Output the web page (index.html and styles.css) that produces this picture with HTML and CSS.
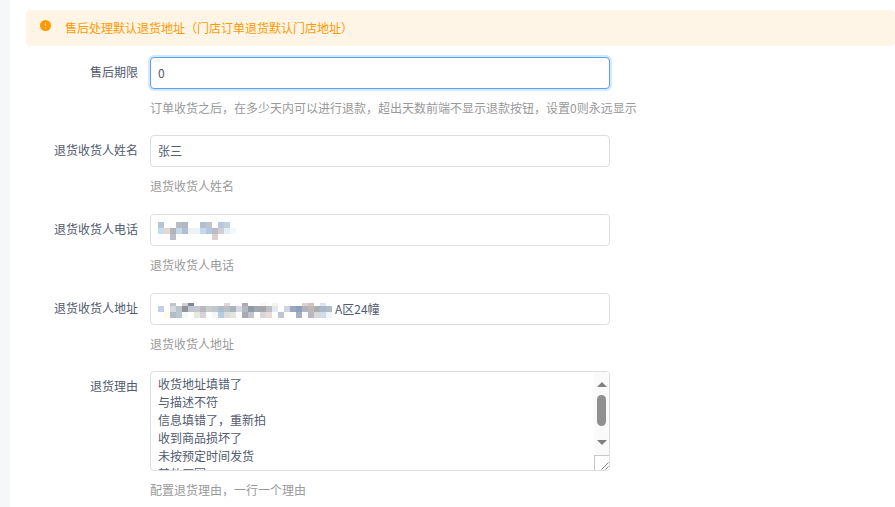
FILE: index.html
```html
<!DOCTYPE html>
<html lang="zh-CN">

<head>
  <meta charset="UTF-8">
  <title>售后设置</title>
  <link rel="stylesheet" href="styles.css">
</head>

<body>
  <div class="content">
    <div class="alert">
      <span class="alert-icon">
        <svg width="11" height="11" viewBox="0 0 11 11">
          <circle cx="5.5" cy="5.5" r="5.5" fill="#ff9900" />
          <rect x="5" y="2.5" width="1" height="3.5" fill="#ffd9a0" />
          <rect x="5" y="7" width="1" height="1.2" fill="#ffd9a0" />
        </svg>
      </span>
      <span>售后处理默认退货地址（门店订单退货默认门店地址）</span>
    </div>

    <form class="form">
      <div class="form-item">
        <label>售后期限</label>
        <div class="field">
          <input class="input input-focus" type="text" value="0">
          <div class="help">订单收货之后，在多少天内可以进行退款，超出天数前端不显示退款按钮，设置0则永远显示</div>
        </div>
      </div>

      <div class="form-item">
        <label>退货收货人姓名</label>
        <div class="field">
          <input class="input" type="text" value="张三">
          <div class="help">退货收货人姓名</div>
        </div>
      </div>

      <div class="form-item">
        <label>退货收货人电话</label>
        <div class="field">
          <div class="input-wrap">
            <input class="input" type="text" value="">
            <!-- blurred phone number -->
            <svg class="mosaic" width="80" height="18" viewBox="158 222 80 18">
              <rect x="158" y="222" width="6" height="6" fill="#b8c4d0" />
              <rect x="176" y="222" width="6" height="6" fill="#b8bcc4" />
              <rect x="182" y="222" width="6" height="6" fill="#b0b8c4" />
              <rect x="200" y="222" width="6" height="6" fill="#b4c0cc" />
              <rect x="206" y="222" width="6" height="6" fill="#c0c4d0" />
              <rect x="218" y="222" width="6" height="6" fill="#b8c8dc" />
              <rect x="224" y="222" width="6" height="6" fill="#c4d0e0" />
              <rect x="158" y="228" width="6" height="6" fill="#c4dcf0" />
              <rect x="164" y="228" width="6" height="6" fill="#e4d8d0" />
              <rect x="170" y="228" width="6" height="6" fill="#b0b4bc" />
              <rect x="176" y="228" width="6" height="6" fill="#c4d8ec" />
              <rect x="182" y="228" width="6" height="6" fill="#b0c0d4" />
              <rect x="188" y="228" width="6" height="6" fill="#f0f0f0" />
              <rect x="194" y="228" width="6" height="6" fill="#e8f4fa" />
              <rect x="200" y="228" width="6" height="6" fill="#c8d8ec" />
              <rect x="206" y="228" width="6" height="6" fill="#b4c8e0" />
              <rect x="212" y="228" width="6" height="6" fill="#b8bcc8" />
              <rect x="218" y="228" width="6" height="6" fill="#d0d0d4" />
              <rect x="224" y="228" width="6" height="6" fill="#e4eef4" />
              <rect x="230" y="228" width="6" height="6" fill="#f0fafe" />
              <rect x="170" y="234" width="6" height="6" fill="#bcbccc" />
              <rect x="212" y="234" width="6" height="6" fill="#dcd0cc" />
            </svg>
          </div>
          <div class="help">退货收货人电话</div>
        </div>
      </div>

      <div class="form-item">
        <label>退货收货人地址</label>
        <div class="field">
          <div class="input-wrap">
            <input class="input input-address" type="text" value="A区24幢">
            <!-- blurred street address -->
            <svg class="mosaic mosaic-address" width="176" height="15" viewBox="158 303 176 15">
              <rect x="170" y="303" width="6" height="3" fill="#c0c4cc" />
              <rect x="182" y="303" width="6" height="3" fill="#d0d0d8" />
              <rect x="188" y="303" width="6" height="3" fill="#7c8898" />
              <rect x="224" y="303" width="6" height="3" fill="#e0d4d4" />
              <rect x="242" y="303" width="6" height="3" fill="#b0a8b8" />
              <rect x="260" y="303" width="6" height="3" fill="#fdf4ea" />
              <rect x="272" y="303" width="6" height="3" fill="#f4f4ee" />
              <rect x="302" y="303" width="6" height="3" fill="#e0d0cc" />
              <rect x="308" y="303" width="6" height="3" fill="#d0c4c0" />
              <rect x="320" y="303" width="6" height="3" fill="#dde4f0" />

              <rect x="158" y="306" width="6" height="6" fill="#c4d0e8" />
              <rect x="170" y="306" width="6" height="6" fill="#d8d8e0" />
              <rect x="176" y="306" width="6" height="6" fill="#bcc4cc" />
              <rect x="182" y="306" width="6" height="6" fill="#909498" />
              <rect x="188" y="306" width="6" height="6" fill="#c0c4cc" />
              <rect x="194" y="306" width="6" height="6" fill="#c8c4d4" />
              <rect x="200" y="306" width="6" height="6" fill="#b8b8c0" />
              <rect x="206" y="306" width="6" height="6" fill="#c8ccd0" />
              <rect x="212" y="306" width="6" height="6" fill="#c0c8cc" />
              <rect x="218" y="306" width="6" height="6" fill="#b0bcc8" />
              <rect x="224" y="306" width="6" height="6" fill="#b8c0c8" />
              <rect x="230" y="306" width="6" height="6" fill="#a8b4bc" />
              <rect x="236" y="306" width="6" height="6" fill="#d8d8e4" />
              <rect x="242" y="306" width="6" height="6" fill="#b8b8c4" />
              <rect x="248" y="306" width="6" height="6" fill="#909aa4" />
              <rect x="254" y="306" width="6" height="6" fill="#a0a8b0" />
              <rect x="260" y="306" width="6" height="6" fill="#a8a8ac" />
              <rect x="266" y="306" width="6" height="6" fill="#bbbec2" />
              <rect x="272" y="306" width="6" height="6" fill="#e4e8f0" />
              <rect x="284" y="306" width="6" height="6" fill="#d0d4dc" />
              <rect x="290" y="306" width="6" height="6" fill="#98a8c0" />
              <rect x="296" y="306" width="6" height="6" fill="#90a0b8" />
              <rect x="302" y="306" width="6" height="6" fill="#b0b4bc" />
              <rect x="308" y="306" width="6" height="6" fill="#c0b8b4" />
              <rect x="314" y="306" width="6" height="6" fill="#a8b0b4" />
              <rect x="320" y="306" width="6" height="6" fill="#a8b8c8" />
              <rect x="326" y="306" width="6" height="6" fill="#b0bcc8" />

              <rect x="164" y="312" width="6" height="6" fill="#fdfce8" />
              <rect x="170" y="312" width="6" height="6" fill="#b0bcc8" />
              <rect x="176" y="312" width="6" height="6" fill="#bcc8d0" />
              <rect x="182" y="312" width="6" height="6" fill="#f4fafa" />
              <rect x="194" y="312" width="6" height="6" fill="#e4ecdc" />
              <rect x="200" y="312" width="6" height="6" fill="#d8d0d8" />
              <rect x="212" y="312" width="6" height="6" fill="#f4f8fc" />
              <rect x="218" y="312" width="6" height="6" fill="#b4cce4" />
              <rect x="224" y="312" width="6" height="6" fill="#dcdcdc" />
              <rect x="230" y="312" width="6" height="6" fill="#e8e4e0" />
              <rect x="242" y="312" width="6" height="6" fill="#a8a8b8" />
              <rect x="248" y="312" width="6" height="6" fill="#c0c4cc" />
              <rect x="260" y="312" width="6" height="6" fill="#d8d8dc" />
              <rect x="266" y="312" width="6" height="6" fill="#e8dcd4" />
              <rect x="278" y="312" width="6" height="6" fill="#c0c4d0" />
              <rect x="296" y="312" width="6" height="6" fill="#a8b0c4" />
              <rect x="308" y="312" width="6" height="6" fill="#b8b8c0" />
              <rect x="314" y="312" width="6" height="6" fill="#d8d8dc" />
              <rect x="320" y="312" width="6" height="6" fill="#d0dce8" />
              <rect x="326" y="312" width="6" height="6" fill="#f0f4f8" />
            </svg>
          </div>
          <div class="help">退货收货人地址</div>
        </div>
      </div>

      <div class="form-item">
        <label>退货理由</label>
        <div class="field">
          <div class="input-wrap">
            <textarea class="textarea" readonly>收货地址填错了
与描述不符
信息填错了，重新拍
收到商品损坏了
未按预定时间发货
其他原因</textarea>
            <!-- headless chrome hides real scrollbars, so draw it -->
            <div class="scrollbar">
              <span class="arrow-up"></span>
              <span class="thumb"></span>
              <span class="arrow-down"></span>
            </div>
            <div class="resize-corner">
              <svg width="14" height="14" viewBox="0 0 14 14">
                <path d="M6.5 13.5 L13.5 6.5 M10.5 13.5 L13.5 10.5" stroke="#808080" stroke-width="1" fill="none" />
              </svg>
            </div>
          </div>
          <div class="help">配置退货理由，一行一个理由</div>
        </div>
      </div>
    </form>
  </div>
</body>

</html>
```

FILE: styles.css
```css
html,
body {
  margin: 0;
  padding: 0;
  height: 507px;
  overflow: hidden;
}

body {
  background-color: #f5f7f9;
  font-family: "Noto Sans CJK SC", "Liberation Sans", sans-serif;
  font-size: 12px;
  color: #515a6e;
}

.content {
  margin-left: 10px;
  height: 507px;
  background-color: white;
  padding: 10px 0 0 16px;
}

.alert {
  display: flex;
  align-items: center;
  height: 36px;
  padding: 0 0 2px 14px;
  box-sizing: border-box;
  background-color: #fff5e6;
  border-radius: 4px;
  color: #ff9900;
}

.alert-icon {
  display: flex;
  width: 25px;
  margin-top: -3px;
}

.form {
  margin-top: 10.8px;
}

.form-item {
  display: flex;
  margin-bottom: 15px;
}

.form-item label {
  width: 112px;
  padding-top: 7px;
  text-align: right;
  line-height: 16px;
  flex-shrink: 0;
}

.field {
  margin-left: 12px;
  width: 460px;
}

.input-wrap {
  position: relative;
}

.mosaic {
  position: absolute;
  left: 8px;
  top: 8px;
}

.mosaic-address {
  top: 10px;
}

.input,
.textarea {
  display: block;
  box-sizing: border-box;
  width: 460px;
  border: 1px solid #dcdee2;
  border-radius: 4px;
  font-family: inherit;
  font-size: 12px;
  color: #515a6e;
  outline: none;
  padding: 0 7px;
}

.input {
  height: 32px;
  padding-bottom: 1px;
}

.input-focus {
  border-color: #57a3f3;
  box-shadow: 0 0 0 2px rgba(45, 140, 240, .2);
}

.input-address {
  padding-left: 184px;
}

.textarea {
  height: 100px;
  padding: 3px 7px;
  line-height: 18px;
  overflow: hidden;
  resize: none;
}

.scrollbar {
  position: absolute;
  top: 1px;
  right: 1px;
  width: 15px;
  height: 83px;
  box-sizing: border-box;
  padding-top: 10px;
  background-color: #fafafa;
  border-top-right-radius: 3px;
  display: flex;
  flex-direction: column;
  align-items: center;
}

.arrow-up,
.arrow-down {
  width: 0;
  height: 0;
  border-left: 5px solid transparent;
  border-right: 5px solid transparent;
}

.arrow-up {
  border-bottom: 5px solid #808080;
}

.arrow-down {
  border-top: 5px solid #808080;
  margin-top: 14px;
}

.thumb {
  width: 9px;
  height: 31px;
  margin-top: 8px;
  border-radius: 5px;
  background-color: #909090;
}

.resize-corner {
  position: absolute;
  right: 1px;
  bottom: 1px;
  width: 15px;
  height: 15px;
  box-sizing: border-box;
  background-color: white;
  border-left: 1px solid #c8c8c8;
  border-top: 1px solid #c8c8c8;
  border-bottom-right-radius: 3px;
  overflow: hidden;
}

.resize-corner svg {
  display: block;
}

.help {
  color: #999;
  line-height: 18px;
  margin-top: 10px;
  height: 21.6px;
  white-space: nowrap;
}
```
